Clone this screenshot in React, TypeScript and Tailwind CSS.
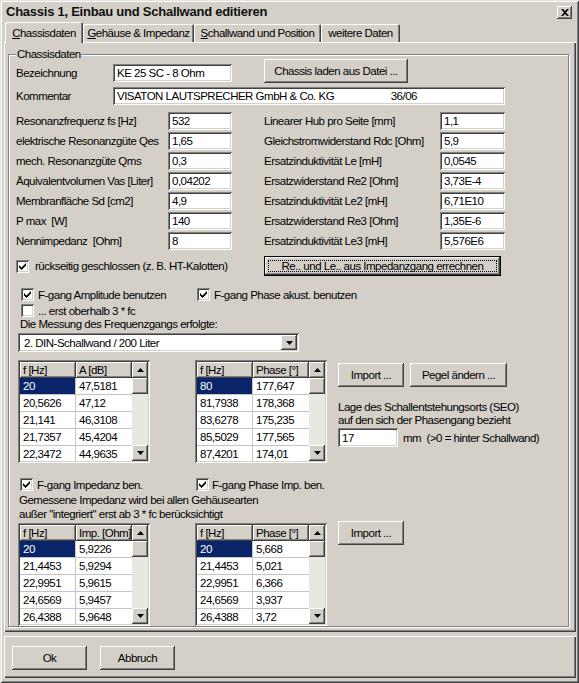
import React from "react"

const raised =
  "shadow-[inset_-1px_-1px_0_#404040,inset_1px_1px_0_#ffffff,inset_-2px_-2px_0_#808080]"
const sunken =
  "shadow-[inset_1px_1px_0_#808080,inset_-1px_-1px_0_#ffffff,inset_2px_2px_0_#404040,inset_-2px_-2px_0_#d4d0c8]"

function Btn({ cls, children }: { cls: string; children: React.ReactNode }) {
  return (
    <div className={`flex items-center justify-center shrink-0 bg-[#d4d0c8] whitespace-nowrap ${raised} ${cls}`}>
      {children}
    </div>
  )
}

function Field({ cls, value }: { cls: string; value: string }) {
  return (
    <div className={`flex items-center shrink-0 bg-white pl-[4px] overflow-hidden whitespace-pre ${sunken} ${cls}`}>
      {value}
    </div>
  )
}

function Check({ on }: { on: boolean }) {
  return (
    <div className={`w-[13px] h-[13px] shrink-0 bg-white flex items-center justify-center ${sunken}`}>
      {on && (
        <svg width="7" height="7" viewBox="0 0 7 7">
          <path d="M0 2 L2.5 4.5 L7 0 L7 2.5 L2.5 7 L0 4.5 Z" fill="#000" />
        </svg>
      )}
    </div>
  )
}

function Arrow({ up }: { up: boolean }) {
  return (
    <svg width="7" height="4" viewBox="0 0 7 4">
      <path d={up ? "M3.5 0 L7 4 L0 4 Z" : "M0 0 L7 0 L3.5 4 Z"} fill="#000" />
    </svg>
  )
}

function ScrollBar() {
  return (
    <div className="w-[16px] flex flex-col shrink-0">
      <Btn cls="h-[16px] w-[16px]">
        <Arrow up={true} />
      </Btn>
      <Btn cls="h-[16px] w-[16px]">{null}</Btn>
      <div className="flex-1 bg-[#e9e7e1]"></div>
      <Btn cls="h-[16px] w-[16px]">
        <Arrow up={false} />
      </Btn>
    </div>
  )
}

function Grid({ h1, h2, rows }: { h1: string; h2: string; rows: string[][] }) {
  return (
    <div className={`w-[132px] h-[103px] shrink-0 bg-[#d4d0c8] p-[2px] flex ${sunken}`}>
      <div className="flex flex-col w-[112px] overflow-hidden">
        <div className="flex h-[16px] shrink-0">
          <div className={`w-[56px] flex items-center pl-[3px] whitespace-nowrap overflow-hidden ${raised}`}>{h1}</div>
          <div className={`w-[56px] flex items-center pl-[3px] whitespace-nowrap overflow-hidden ${raised}`}>{h2}</div>
        </div>
        {rows.map(([a, b], i) => (
          <div key={i} className="flex h-[17px] shrink-0">
            <div
              className={`w-[56px] flex items-center pl-[3px] border-r border-b border-[#c4c4c4] ${
                i === 0 ? "bg-[#0a246a] text-white" : "bg-white"
              }`}
            >
              {a}
            </div>
            <div className="w-[56px] flex items-center pl-[3px] bg-white border-b border-[#c4c4c4]">{b}</div>
          </div>
        ))}
      </div>
      <ScrollBar />
    </div>
  )
}

const leftRows = [
  ["Resonanzfrequenz fs [Hz]", "532"],
  ["elektrische Resonanzgüte Qes", "1,65"],
  ["mech. Resonanzgüte Qms", "0,3"],
  ["Äquivalentvolumen Vas [Liter]", "0,04202"],
  ["Membranfläche Sd [cm2]", "4,9"],
  ["P max  [W]", "140"],
  ["Nennimpedanz  [Ohm]", "8"],
]

const rightRows = [
  ["Linearer Hub pro Seite [mm]", "1,1"],
  ["Gleichstromwiderstand Rdc [Ohm]", "5,9"],
  ["Ersatzinduktivität Le [mH]", "0,0545"],
  ["Ersatzwiderstand Re2 [Ohm]", "3,73E-4"],
  ["Ersatzinduktivität Le2 [mH]", "6,71E10"],
  ["Ersatzwiderstand Re3 [Ohm]", "1,35E-6"],
  ["Ersatzinduktivität Le3 [mH]", "5,576E6"],
]

const ampRows = [
  ["20", "47,5181"],
  ["20,5626", "47,12"],
  ["21,141", "46,3108"],
  ["21,7357", "45,4204"],
  ["22,3472", "44,9635"],
]

const phaseRows = [
  ["80", "177,647"],
  ["81,7938", "178,368"],
  ["83,6278", "175,235"],
  ["85,5029", "177,565"],
  ["87,4201", "174,01"],
]

const impRows = [
  ["20", "5,9226"],
  ["21,4453", "5,9294"],
  ["22,9951", "5,9615"],
  ["24,6569", "5,9457"],
  ["26,4388", "5,9648"],
]

const impPhaseRows = [
  ["20", "5,668"],
  ["21,4453", "5,021"],
  ["22,9951", "6,366"],
  ["24,6569", "3,937"],
  ["26,4388", "3,72"],
]

export default function App() {
  return (
    <div className="w-[579px] h-[683px] overflow-hidden bg-[#d4d0c8] text-black font-['Liberation_Sans',Arial,sans-serif] text-[11.5px] tracking-[-0.5px] leading-[14px] pl-[4px] pr-[3px] flex flex-col shadow-[inset_1px_1px_0_#e4e2dc,inset_-1px_-1px_0_#404040,inset_2px_2px_0_#ffffff,inset_-2px_-2px_0_#808080]">
      {/* title bar */}
      <div className="h-[22px] shrink-0 flex items-center justify-between pl-[2px] pr-[4px] pt-[2px]">
        <span className="font-bold text-[13px] tracking-[-0.25px] text-[#101010]">
          Chassis 1, Einbau und Schallwand editieren
        </span>
        <Btn cls="w-[15px] h-[13px]">
          <svg width="8" height="7" viewBox="0 0 8 7">
            <path d="M0 0 H2 L4 2 L6 0 H8 L5 3.5 L8 7 H6 L4 5 L2 7 H0 L3 3.5 Z" fill="#000" />
          </svg>
        </Btn>
      </div>

      {/* tabs */}
      <div className="h-[20px] shrink-0 flex items-end pl-[1px]">
        <div className="relative z-10 w-[78px] h-[21px] -mb-[1px] flex items-center justify-center bg-[#d4d0c8] rounded-t-[2px] shadow-[inset_1px_1px_0_#ffffff,inset_-1px_0_0_#404040,inset_-2px_0_0_#808080]">
          <span>
            <span className="underline">C</span>hassisdaten
          </span>
        </div>
        <div className="w-[111px] h-[18px] flex items-center justify-center rounded-t-[2px] shadow-[inset_1px_1px_0_#ffffff,inset_-1px_0_0_#404040,inset_-2px_0_0_#808080]">
          <span>
            <span className="underline">G</span>ehäuse &amp; Impedanz
          </span>
        </div>
        <div className="w-[127px] h-[18px] flex items-center justify-center rounded-t-[2px] shadow-[inset_1px_1px_0_#ffffff,inset_-1px_0_0_#404040,inset_-2px_0_0_#808080]">
          <span>
            <span className="underline">S</span>challwand und Position
          </span>
        </div>
        <div className="w-[79px] h-[18px] flex items-center justify-center rounded-t-[2px] shadow-[inset_1px_1px_0_#ffffff,inset_-1px_0_0_#404040,inset_-2px_0_0_#808080]">
          weitere Daten
        </div>
      </div>

      {/* tab panel */}
      <div className="w-[572px] h-[590px] shrink-0 pt-[12px] pl-[4px] shadow-[inset_1px_1px_0_#ffffff,inset_-1px_-1px_0_#404040,inset_-2px_-2px_0_#808080]">
        <div className="w-[561px] h-[573px] border border-[#808080] pl-[7px] flex flex-col shadow-[inset_1px_1px_0_#ffffff,1px_1px_0_#ffffff]">
          <span className="block w-fit -mt-[8px] px-[1px] h-[14px] leading-[14px] bg-[#d4d0c8]">Chassisdaten</span>

          {/* Bezeichnung */}
          <div className="flex h-[24px] -mt-[2px]">
            <div className="w-[97px] h-[18px] leading-[18px] self-end mb-[1px]">Bezeichnung</div>
            <Field cls="w-[119px] h-[18px] self-end mb-[1px]" value="KE 25 SC - 8 Ohm" />
            <Btn cls="ml-[32px] w-[144px] h-[24px]">Chassis laden aus Datei ...</Btn>
          </div>

          {/* Kommentar */}
          <div className="flex h-[18px] mt-[4px]">
            <div className="w-[97px] leading-[18px]">Kommentar</div>
            <Field
              cls="w-[392px] h-[18px]"
              value="VISATON LAUTSPRECHER GmbH & Co. KG                     36/06"
            />
          </div>

          {/* parameter rows */}
          <div className="flex flex-col gap-[2px] mt-[7px]">
            {leftRows.map((r, i) => (
              <div key={i} className="flex h-[18px] items-center">
                <div className="w-[152px] whitespace-pre">{r[0]}</div>
                <Field cls="w-[64px] h-[18px]" value={r[1]} />
                <div className="w-[32px]"></div>
                <div className="w-[176px]">{rightRows[i][0]}</div>
                <Field cls="w-[65px] h-[18px]" value={rightRows[i][1]} />
              </div>
            ))}
          </div>

          {/* rückseitig */}
          <div className="flex h-[20px] items-center mt-[6px]">
            <div className="w-[248px] flex items-center">
              <Check on={true} />
              <span className="ml-[6px]">rückseitig geschlossen (z. B. HT-Kalotten)</span>
            </div>
            <div className={`w-[237px] h-[20px] border border-black bg-[#d4d0c8] p-[3px] ${raised}`}>
              <div className="w-full h-full border border-dotted border-black flex items-center justify-center">
                Re.. und Le.. aus Impedanzgang errechnen
              </div>
            </div>
          </div>

          {/* Frequenzgang */}
          <div className="flex h-[13px] items-center mt-[12px] pl-[5px]">
            <div className="w-[176px] flex items-center">
              <Check on={true} />
              <span className="ml-[4px]">F-gang Amplitude benutzen</span>
            </div>
            <Check on={true} />
            <span className="ml-[4px]">F-gang Phase akust. benutzen</span>
          </div>
          <div className="flex h-[13px] items-center mt-[3px] pl-[5px]">
            <Check on={false} />
            <span className="ml-[4px]">... erst oberhalb 3 * fc</span>
          </div>
          <div className="h-[14px] pl-[4px]">Die Messung des Frequenzgangs erfolgte:</div>
          <div className={`ml-[2px] mt-[2px] w-[281px] h-[19px] bg-white flex items-center justify-between pl-[6px] pr-[2px] ${sunken}`}>
            <span>2. DIN-Schallwand / 200 Liter</span>
            <Btn cls="w-[16px] h-[15px]">
              <Arrow up={false} />
            </Btn>
          </div>

          <div className="flex items-start mt-[8px] ml-[2px]">
            <Grid h1="f [Hz]" h2="A [dB]" rows={ampRows} />
            <div className="ml-[45px]">
              <Grid h1="f [Hz]" h2="Phase [°]" rows={phaseRows} />
            </div>
            <div className="ml-[11px] mt-[3px] flex flex-col">
              <div className="flex">
                <Btn cls="w-[66px] h-[24px]">Import ...</Btn>
                <Btn cls="ml-[6px] w-[97px] h-[24px]">Pegel ändern ...</Btn>
              </div>
              <div className="mt-[14px] leading-[13px]">
                Lage des Schallentstehungsorts (SEO)
                <br />
                auf den sich der Phasengang bezieht
              </div>
              <div className="flex items-center mt-[1px]">
                <Field cls="w-[60px] h-[19px]" value="17" />
                <span className="ml-[5px] whitespace-pre">mm  (&gt;0 = hinter Schallwand)</span>
              </div>
            </div>
          </div>

          {/* Impedanz */}
          <div className="flex h-[13px] items-center mt-[15px] pl-[4px]">
            <div className="w-[176px] flex items-center">
              <Check on={true} />
              <span className="ml-[4px]">F-gang Impedanz ben.</span>
            </div>
            <Check on={true} />
            <span className="ml-[3px]">F-gang Phase Imp. ben.</span>
          </div>
          <div className="mt-[2px] pl-[3px] leading-[14px]">
            Gemessene Impedanz wird bei allen Gehäusearten
            <br />
            außer "integriert" erst ab 3 * fc berücksichtigt
          </div>
          <div className="flex items-start ml-[2px]">
            <div className="mt-[2px]">
              <Grid h1="f [Hz]" h2="Imp. [Ohm]" rows={impRows} />
            </div>
            <div className="ml-[45px] mt-[2px]">
              <Grid h1="f [Hz]" h2="Phase [°]" rows={impPhaseRows} />
            </div>
            <Btn cls="ml-[11px] w-[66px] h-[24px]">Import ...</Btn>
          </div>
        </div>
      </div>

      {/* bottom buttons */}
      <div className="mt-[4px] w-[572px] h-[42px] shrink-0 flex items-start pt-[10px] pl-[8px] shadow-[inset_1px_1px_0_#ffffff,inset_-1px_-1px_0_#404040,inset_-2px_-2px_0_#808080]">
        <Btn cls="w-[75px] h-[24px]">Ok</Btn>
        <Btn cls="ml-[13px] w-[75px] h-[24px]">Abbruch</Btn>
      </div>
    </div>
  )
}
